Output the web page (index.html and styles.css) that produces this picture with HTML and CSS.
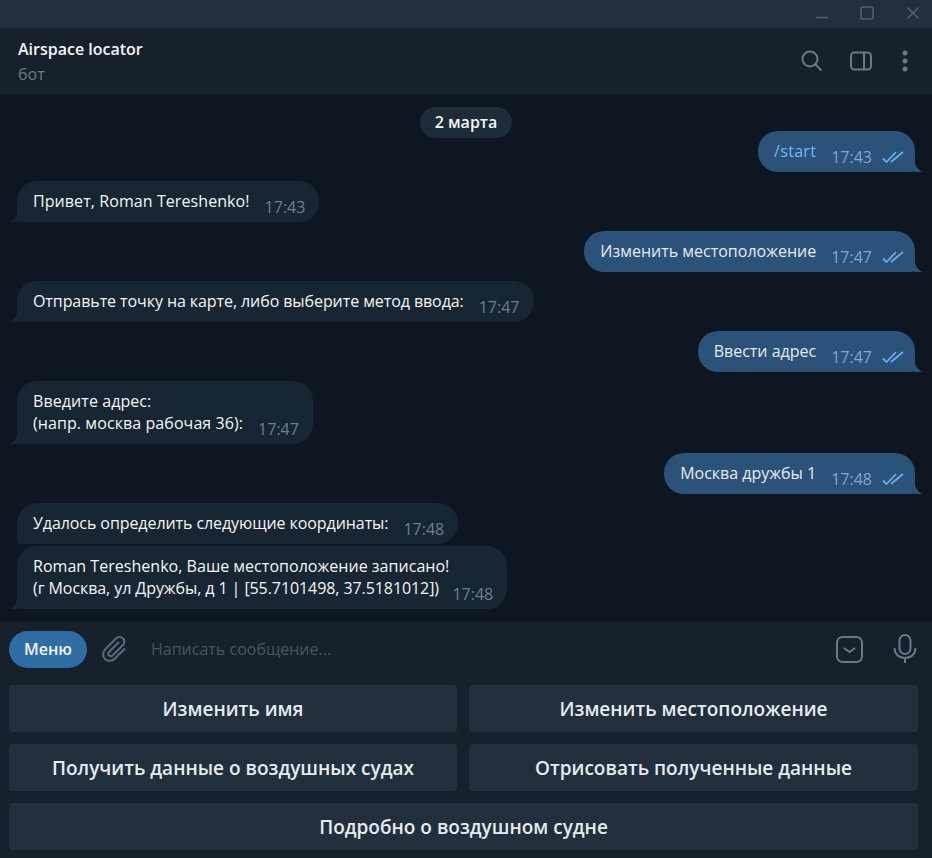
FILE: index.html
```html
<!DOCTYPE html>
<html lang="ru">
<head>
  <meta charset="UTF-8">
  <title>Airspace locator</title>
  <link rel="stylesheet" href="styles.css">
</head>
<body>
  <div class="titlebar">
    <svg class="win-btn" width="14" height="14" viewBox="0 0 14 14"><path d="M2 11.500h12"/></svg>
    <svg class="win-btn" width="14" height="14" viewBox="0 0 14 14"><rect x="1" y="1" width="12" height="12" rx="2"/></svg>
    <svg class="win-btn" width="14" height="14" viewBox="0 0 14 14"><path d="M1.500 1.500l11 11M12.500 1.500l-11 11"/></svg>
  </div>

  <header class="header">
    <div class="peer">
      <div class="peer-name">Airspace locator</div>
      <div class="peer-status">бот</div>
    </div>
    <div class="header-tools">
      <svg class="search" width="24" height="24" viewBox="0 0 24 24"><circle cx="10" cy="10" r="7.500"/><path d="M15.500 15.500l6 6"/></svg>
      <svg width="24" height="24" viewBox="0 0 24 24"><rect x="2" y="3.500" width="20" height="17" rx="3.500"/><path d="M15 3.500v17"/></svg>
      <svg width="24" height="24" viewBox="0 0 24 24"><circle class="dot" cx="12" cy="4" r="2.500"/><circle class="dot" cx="12" cy="12" r="2.500"/><circle class="dot" cx="12" cy="20" r="2.500"/></svg>
    </div>
  </header>

  <main class="chat">
    <div class="date-pill">2 марта</div>

    <div class="msg out">
      <span class="msg-text cmd">/start</span>
      <span class="msg-meta">17:43 <svg class="ticks" width="22" height="12" viewBox="0 0 22 12"><path d="M1 7.500l3.500 3.500L14 1M9 11L21 1"/></svg></span>
      <svg class="tail" width="8" height="16" viewBox="0 0 8 16"><path d="M0 0c0 8 3 13 8 16H0z"/></svg>
    </div>
    <div class="msg in">
      <span class="msg-text loose">Привет, Roman Tereshenko!</span>
      <span class="msg-meta">17:43</span>
      <svg class="tail" width="8" height="16" viewBox="0 0 8 16"><path d="M8 0C8 8 5 13 0 16h8z"/></svg>
    </div>
    <div class="msg out">
      <span class="msg-text">Изменить местоположение</span>
      <span class="msg-meta">17:47 <svg class="ticks" width="22" height="12" viewBox="0 0 22 12"><path d="M1 7.500l3.500 3.500L14 1M9 11L21 1"/></svg></span>
      <svg class="tail" width="8" height="16" viewBox="0 0 8 16"><path d="M0 0c0 8 3 13 8 16H0z"/></svg>
    </div>
    <div class="msg in">
      <span class="msg-text tight">Отправьте точку на карте, либо выберите метод ввода:</span>
      <span class="msg-meta">17:47</span>
      <svg class="tail" width="8" height="16" viewBox="0 0 8 16"><path d="M8 0C8 8 5 13 0 16h8z"/></svg>
    </div>
    <div class="msg out">
      <span class="msg-text">Ввести адрес</span>
      <span class="msg-meta">17:47 <svg class="ticks" width="22" height="12" viewBox="0 0 22 12"><path d="M1 7.500l3.500 3.500L14 1M9 11L21 1"/></svg></span>
      <svg class="tail" width="8" height="16" viewBox="0 0 8 16"><path d="M0 0c0 8 3 13 8 16H0z"/></svg>
    </div>
    <div class="msg in">
      <span class="msg-text loose">Введите адрес:<br>(напр. москва рабочая 36):</span>
      <span class="msg-meta">17:47</span>
      <svg class="tail" width="8" height="16" viewBox="0 0 8 16"><path d="M8 0C8 8 5 13 0 16h8z"/></svg>
    </div>
    <div class="msg out">
      <span class="msg-text">Москва дружбы 1</span>
      <span class="msg-meta">17:48 <svg class="ticks" width="22" height="12" viewBox="0 0 22 12"><path d="M1 7.500l3.500 3.500L14 1M9 11L21 1"/></svg></span>
      <svg class="tail" width="8" height="16" viewBox="0 0 8 16"><path d="M0 0c0 8 3 13 8 16H0z"/></svg>
    </div>
    <div class="msg in first">
      <span class="msg-text tight">Удалось определить следующие координаты:</span>
      <span class="msg-meta">17:48</span>
    </div>
    <div class="msg in last">
      <span class="msg-text"><span class="tight-sm">Roman Tereshenko, Ваше местоположение записано!</span><br><span class="tight">(г Москва, ул Дружбы, д 1 | [55.7101498, 37.5181012])</span></span>
      <span class="msg-meta">17:48</span>
      <svg class="tail" width="8" height="16" viewBox="0 0 8 16"><path d="M8 0C8 8 5 13 0 16h8z"/></svg>
    </div>
  </main>

  <section class="composer">
    <button class="menu-btn" type="button">Меню</button>
    <svg class="attach" width="28" height="28" viewBox="0 0 28 28"><path d="M24 13.500L14 23.500c-3 3-7.500 3-10 .5s-2.500-7 .5-10L15 3.500c2-2 5-2 7-.2s1.800 5-.2 7L11.500 20.500c-1 1-2.500 1-3.500 0s-1-2.500 0-3.500L18 7"/></svg>
    <div class="placeholder">Написать сообщение...</div>
    <svg class="kbd" width="27" height="27" viewBox="0 0 27 27"><rect x="1" y="1" width="25" height="25" rx="5.500"/><path d="M8 12l5.500 4 5.500-4"/></svg>
    <svg class="mic" width="24" height="30" viewBox="0 0 24 30"><rect x="6.500" y="1" width="11" height="19" rx="5.500"/><path d="M1.500 14c0 6 4.500 10 10.500 10s10.500-4 10.500-10M12 24v5"/></svg>
  </section>

  <section class="keyboard">
    <button class="kb-btn" type="button">Изменить имя</button>
    <button class="kb-btn" type="button">Изменить местоположение</button>
    <button class="kb-btn" type="button">Получить данные о воздушных судах</button>
    <button class="kb-btn" type="button">Отрисовать полученные данные</button>
    <button class="kb-btn wide" type="button">Подробно о воздушном судне</button>
  </section>
</body>
</html>
```

FILE: styles.css
```css
body {
  font-family: "Open Sans", "Noto Sans", sans-serif;
  margin: 0;
  height: 858px;
  overflow: hidden;
  background: #17212b;
  color: #f5f5f5;
  font-size: 16px;
  line-height: 22px;
}
svg {
  display: block;
  fill: none;
  stroke-width: 2;
}

/* Titlebar */
.titlebar {
  height: 28px;
  background: #242f3d;
  display: flex;
  justify-content: flex-end;
  align-items: flex-start;
  gap: 32px;
  padding: 6px 12px 0 0;
  box-sizing: border-box;
}
.win-btn {
  stroke: #56616d;
  stroke-width: 1.500;
}

/* Header */
.header {
  height: 67px;
  box-sizing: border-box;
  display: flex;
  align-items: center;
  justify-content: space-between;
  padding: 0 15px 0 18px;
  border-bottom: 1px solid #131b24;
}
.peer {
  padding-top: 1px;
}
.peer-name {
  font-weight: 600;
  color: #f5f5f5;
}
.peer-status {
  color: #6d7883;
  margin-top: 3px;
}
.header-tools {
  display: flex;
  align-items: center;
  gap: 20px;
}
.header-tools svg {
  stroke: #6c7883;
}
.header-tools .search {
  margin-right: 5px;
}
.header-tools .dot {
  stroke: none;
  fill: #6c7883;
}

/* Chat */
.chat {
  height: 526px;
  box-sizing: border-box;
  background: #0e1621;
  padding: 12px 10px 0 10px;
  display: flex;
  flex-direction: column;
  align-items: flex-start;
  overflow: hidden;
}
.date-pill {
  align-self: center;
  background: #1e2c3a;
  border-radius: 16px;
  padding: 4px 15px 5px 15px;
  font-weight: 600;
  margin-bottom: -7px;
}
.msg {
  position: relative;
  display: flex;
  align-items: flex-end;
  gap: 15px;
  padding: 9px 14px 10px 16px;
  margin: 0 0 9px 7px;
  border-radius: 20px;
  background: #182533;
}
.msg.out {
  align-self: flex-end;
  margin: 0 7px 9px 0;
  padding-right: 11px;
  background: #2b5278;
  color: #e4ecf2;
  border-bottom-right-radius: 4px;
}
.msg.in {
  border-bottom-left-radius: 4px;
}
.msg.first {
  margin-bottom: 2px;
}
.msg.last .msg-meta {
  margin-left: -12px;
}
.loose {
  letter-spacing: 0.08px;
}
.tight {
  letter-spacing: -0.08px;
}
.tight-sm {
  letter-spacing: 0.03px;
}
.cmd {
  color: #71baf2;
  letter-spacing: 0.3px;
}
.msg-meta {
  display: flex;
  align-items: center;
  gap: 10px;
  color: #6d7f8f;
  line-height: 22px;
  position: relative;
  top: 6px;
}
.out .msg-meta {
  color: #7da8d3;
}
.ticks {
  stroke: #68aeea;
  stroke-width: 1.800;
}
.tail {
  position: absolute;
  bottom: 0;
  stroke: none;
}
.in .tail {
  left: -7px;
  fill: #182533;
}
.out .tail {
  right: -7px;
  fill: #2b5278;
}

/* Composer */
.composer {
  height: 64px;
  box-sizing: border-box;
  display: flex;
  align-items: center;
  padding: 0 15px 8px 9px;
}
.menu-btn {
  width: 78px;
  height: 37px;
  border: none;
  border-radius: 19px;
  background: #2f6ea5;
  color: #f5f5f5;
  font-family: inherit;
  font-size: 16px;
  font-weight: 600;
  padding: 0;
}
.attach {
  stroke: #5d6b78;
  margin-left: 14px;
}
.placeholder {
  flex: 1;
  color: #485561;
  margin-left: 22px;
}
.kbd {
  stroke: #6c7883;
}
.mic {
  stroke: #6c7883;
  margin-left: 30px;
}

/* Keyboard */
.keyboard {
  display: grid;
  grid-template-columns: 448px 449px;
  gap: 12px;
  padding: 0 14px 0 9px;
}
.kb-btn {
  height: 47px;
  border: none;
  border-radius: 4px;
  background: #242f3d;
  color: #e4ecf2;
  font-family: inherit;
  font-size: 19px;
  font-weight: 600;
  padding: 0;
}
.kb-btn.wide {
  grid-column: 1 / 3;
}
```
